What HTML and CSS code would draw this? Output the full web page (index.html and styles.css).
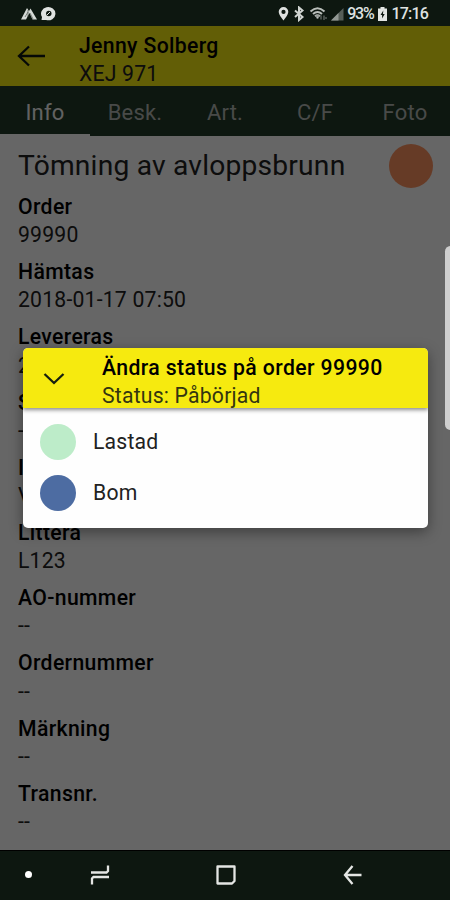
FILE: index.html
```html
<!DOCTYPE html>
<html lang="sv">
<head>
<meta charset="UTF-8">
<meta name="viewport" content="width=device-width, initial-scale=1.0">
<title>Order 99990</title>
<link rel="stylesheet" href="styles.css">
</head>
<body>

<div class="phone">

  <!-- Statusrad -->
  <div class="statusbar">
    <svg class="notices" width="38" height="16" viewBox="0 0 38 16">
      <path d="M0 13.500L6 2l2 3 1.500-2.500L16 13.500h-4.500L8.500 7 5 13.500z" fill="#d5d9d6"/>
      <path d="M7 4v7M4 11l3-5M9 7l3 6" stroke="#3c443e" stroke-width="0.600" fill="none"/>
      <path d="M20.500 14l.5-3a7.200 6.600 0 1 1 4 3z" fill="#e0e3e1"/>
      <circle cx="27.800" cy="7.500" r="2.700" fill="#0d1710"/>
      <path d="M26 9l3-3" stroke="#e0e3e1" stroke-width="1"/>
    </svg>
    <svg class="signals" width="66" height="16" viewBox="0 0 66 16">
      <path d="M5.500 1a4.800 4.800 0 0 0-4.800 4.800C.7 9 5.500 14.500 5.500 14.500S10.300 9 10.300 5.800A4.800 4.800 0 0 0 5.500 1zm0 2.800a2.100 2.100 0 1 1 0 4.200 2.100 2.100 0 0 1 0-4.200z" fill="#dfe2e0" fill-rule="evenodd"/>
      <path d="M17 4.500l7.500 6.500-3.500 3V1.500l3.500 3-7.500 6.500" fill="none" stroke="#d0d4d1" stroke-width="2"/>
      <path d="M32.500 5.500q7-6.500 14 0M35 8q4.500-4 9 0M37 10.200q2.500-2 5 0" fill="none" stroke="#b9beba" stroke-width="2"/>
      <path d="M37.500 10h4l-2 3zM43 13.500v-4M46 14v-4.500M48 11v2" fill="#b9beba" stroke="#7c827e" stroke-width="1"/>
      <path d="M53 14.500L65.500 2v12.500z" fill="#565e58"/>
      <path d="M53 14.500l7.500-7.500v7.500z" fill="#929893"/>
    </svg>
    <span class="battery-text">93%</span>
    <svg class="battery" width="9" height="14" viewBox="0 0 9 14">
      <path d="M2.500 0h4v1.500H9V14H0V1.500h2.500z" fill="#e2e5e3"/>
      <path d="M5.300 3.500L2.500 8h1.600v3.500L6.700 7H5z" fill="#0d1710"/>
    </svg>
    <span class="clock">17:16</span>
  </div>

  <div class="app">
    <div class="header">
      <svg class="back" width="30" height="22" viewBox="0 0 30 22">
        <path d="M12 1.500L2 11l10 9.500M2 11h26" fill="none" stroke="#0d1710" stroke-width="2.300"/>
      </svg>
      <div>
        <div class="name">Jenny Solberg</div>
        <div class="reg">XEJ 971</div>
      </div>
    </div>

    <div class="tabs">
      <div class="tab active">Info</div>
      <div class="tab">Besk.</div>
      <div class="tab">Art.</div>
      <div class="tab">C/F</div>
      <div class="tab">Foto</div>
    </div>

    <div class="content">
      <div class="title-row">
        <h1>Tömning av avloppsbrunn</h1>
        <span class="order-status"></span>
      </div>
      <dl>
        <dt>Order</dt>
        <dd>99990</dd>
        <dt>Hämtas</dt>
        <dd>2018-01-17 07:50</dd>
        <dt>Levereras</dt>
        <dd>2</dd>
        <dt>S</dt>
        <dd>--</dd>
        <dt>I</dt>
        <dd>V</dd>
        <dt>Littera</dt>
        <dd>L123</dd>
        <dt>AO-nummer</dt>
        <dd>--</dd>
        <dt>Ordernummer</dt>
        <dd>--</dd>
        <dt>Märkning</dt>
        <dd>--</dd>
        <dt>Transnr.</dt>
        <dd>--</dd>
      </dl>
    </div>

    <div class="overlay"></div>
    <div class="edge-handle"></div>

    <!-- Dialog för att ändra status -->
    <div class="dialog">
      <div class="dialog-header">
        <svg class="chevron" width="22" height="14" viewBox="0 0 22 14">
          <path d="M1.500 2l9.500 9L20.500 2" fill="none" stroke="#17200f" stroke-width="2.300"/>
        </svg>
        <div>
          <div class="dialog-title">Ändra status på order 99990</div>
          <div class="dialog-sub">Status: Påbörjad</div>
        </div>
      </div>
      <div class="options">
        <div class="option"><span class="dot loaded"></span>Lastad</div>
        <div class="option"><span class="dot miss"></span>Bom</div>
      </div>
    </div>
  </div>

  <!-- Navigeringsknappar -->
  <div class="navbar">
    <span class="nav-dot"></span>
    <svg class="recent" width="20" height="20" viewBox="0 0 20 20">
      <path d="M1 7.500h15.500l1.500-1.500V0.500M19 12H3.500L2 13.500V19.500" fill="none" stroke="#e4e6e4" stroke-width="2.300"/>
    </svg>
    <svg class="home" width="20" height="20" viewBox="0 0 20 20">
      <path d="M1.500 1.500h17V16l-2.500 2.500H1.500z" fill="none" stroke="#e4e6e4" stroke-width="2.300" stroke-linejoin="round"/>
    </svg>
    <svg class="nav-back" width="19" height="20" viewBox="0 0 19 20">
      <path d="M9.500 1L2 10l7.500 9M2 10h16.500" fill="none" stroke="#e4e6e4" stroke-width="2.300"/>
    </svg>
  </div>

</div>

</body>
</html>
```

FILE: styles.css
```css
* {
  box-sizing: border-box;
}
body {
  margin: 0;
  font-family: Roboto, "Liberation Sans", sans-serif;
  font-size: 21.200px;
  line-height: 28px;
  letter-spacing: 0.2px;
  color: #000;
  background: #0d1710;
}
.phone {
  width: 450px;
  height: 900px;
  display: flex;
  flex-direction: column;
  overflow: hidden;
}
.statusbar {
  flex: none;
  height: 26px;
  display: flex;
  align-items: center;
  padding: 2px 22px 0 21px;
  color: #dfe2e0;
  font-size: 16px;
  font-weight: 500;
  letter-spacing: -0.8px;
}
.signals {
  margin-left: auto;
}
.battery-text {
  margin-left: 3px;
  letter-spacing: -1.300px;
}
.battery {
  margin: 0 4px 0 5px;
}
.app {
  flex: 1;
  min-height: 0;
  position: relative;
  display: flex;
  flex-direction: column;
  overflow: hidden;
  background: #fff;
}
.header {
  flex: none;
  height: 60px;
  display: flex;
  padding: 6px 17px 0;
  background: #f6ea0f;
}
.back {
  margin: 13px 32px 0 0;
}
.name,
.dialog-title,
dt {
  font-weight: 500;
  letter-spacing: 0.35px;
}
.reg {
  color: #222;
}
.tabs {
  flex: none;
  height: 50px;
  display: flex;
  background: #213a28;
  line-height: 53px;
  text-align: center;
  font-size: 22px;
}
.tab {
  flex: 1;
  color: #b4b8b5;
}
.tab.active {
  color: #f4f4f4;
  border-bottom: 2px solid #fff;
}
.content {
  padding: 8px 17px 0 18px;
}
.title-row {
  display: flex;
  justify-content: space-between;
  align-items: center;
  height: 44px;
  margin-bottom: 5px;
}
h1 {
  margin: 0;
  font-size: 28.200px;
  font-weight: 400;
  line-height: 42px;
  color: #222;
}
.order-status {
  width: 44px;
  height: 44px;
  border-radius: 50%;
  background: #ff9360;
}
dl {
  margin: 0;
}
dt {
  height: 28.200px;
}
dd {
  margin: 0 0 9px;
  color: #222;
}
.overlay {
  position: absolute;
  inset: 0;
  background: rgba(0, 0, 0, 0.6);
}
.edge-handle {
  position: absolute;
  top: 220px;
  right: -6px;
  width: 11px;
  height: 184px;
  border-radius: 6px;
  background: #cfcfcf;
}
.dialog {
  position: absolute;
  top: 322px;
  left: 23px;
  width: 405px;
  height: 180px;
  border-radius: 5px;
  overflow: hidden;
  background: #fefefe;
  box-shadow: 0 4px 14px rgba(0, 0, 0, 0.4);
}
.dialog-header {
  height: 60px;
  display: flex;
  padding: 6px 20px 0;
  background: #f6ea0f;
  box-shadow: 0 2px 4px rgba(0, 0, 0, 0.45);
}
.chevron {
  margin: 18px 37px 0 0;
}
.dialog-title {
  letter-spacing: 0.4px;
}
.dialog-sub {
  color: #33350f;
}
.options {
  padding: 8px 17px;
}
.option {
  display: flex;
  align-items: center;
  height: 51px;
  color: #222;
}
.dot {
  width: 36px;
  height: 36px;
  margin-right: 17px;
  border-radius: 50%;
}
.loaded {
  background: #bdecc9;
}
.miss {
  background: #4d6ca2;
}
.navbar {
  flex: none;
  height: 50px;
  display: flex;
  align-items: center;
  padding-bottom: 2px;
  border-top: 1px solid #000;
}
.nav-dot {
  width: 7px;
  height: 7px;
  margin: 0 58px 0 25px;
  border-radius: 50%;
  background: #fff;
}
.recent {
  margin-right: 106px;
}
.home {
  margin-right: 107px;
}
```
